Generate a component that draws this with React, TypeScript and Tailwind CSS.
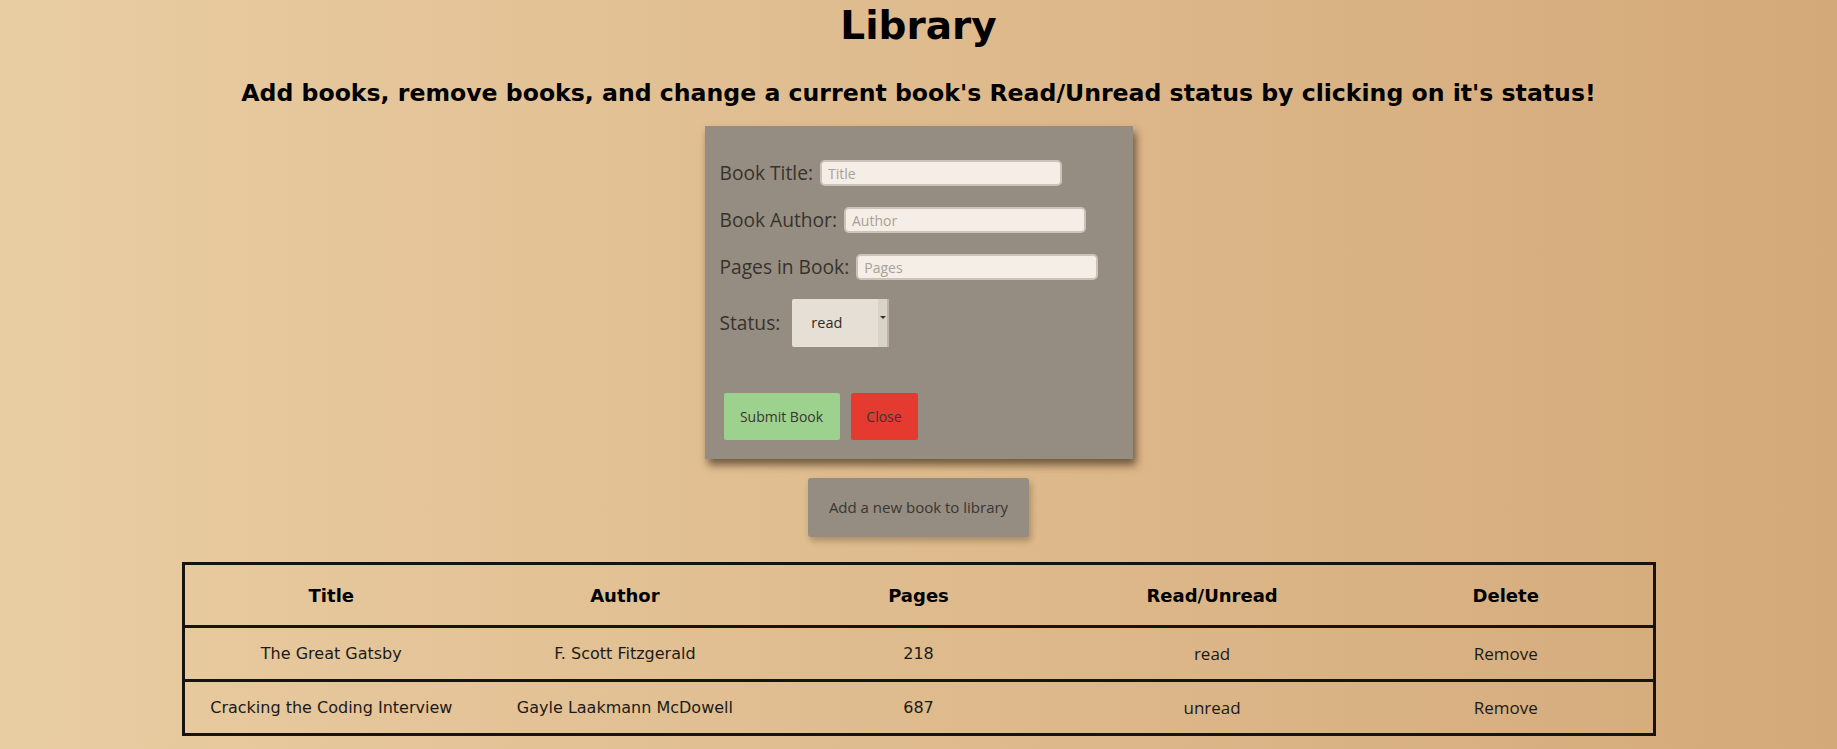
import React from "react";

const rows = [
  { title: "The Great Gatsby", author: "F. Scott Fitzgerald", pages: "218", status: "read" },
  { title: "Cracking the Coding Interview", author: "Gayle Laakmann McDowell", pages: "687", status: "unread" },
];

function Field({ label, placeholder }: { label: string; placeholder: string }) {
  return (
    <div className="flex items-center h-[26px] gap-[7px]">
      <span className="text-[19.2px] text-[#38322c] font-['Open_Sans',sans-serif] leading-none">{label}</span>
      <div className="w-[242px] h-[26px] rounded-[5px] border-2 border-[#cbc3ba] bg-[#f5eee6] flex items-center px-[6px]">
        <span className="text-[14px] text-[#a8a098] font-['Open_Sans',sans-serif]">{placeholder}</span>
      </div>
    </div>
  );
}

export default function App() {
  return (
    <div className="min-h-[749px] w-full bg-[linear-gradient(to_right,#e9cda2,#d4a979)] flex flex-col items-center font-['DejaVu_Sans',sans-serif]">
      <h1 className="mt-[3px] text-[39px] leading-[46px] font-bold text-black">Library</h1>
      <h2 className="mt-[30px] text-[23.6px] leading-[28px] font-bold text-black">
        Add books, remove books, and change a current book's Read/Unread status by clicking on it's status!
      </h2>

      <div className="mt-[19px] w-[428px] h-[333px] bg-[#958d82] shadow-[3px_6px_8px_rgba(40,25,10,0.6)] pt-[34px] pl-[15px] flex flex-col">
        <div className="flex flex-col gap-[21px]">
          <Field label="Book Title:" placeholder="Title" />
          <Field label="Book Author:" placeholder="Author" />
          <Field label="Pages in Book:" placeholder="Pages" />
        </div>
        <div className="mt-[19px] flex items-center gap-[12px] h-[48px]">
          <span className="text-[19.2px] text-[#38322c] font-['Open_Sans',sans-serif] leading-none">Status:</span>
          <div className="flex h-[48px] w-[97px] rounded-l-[2px] overflow-hidden">
            <div className="flex-1 bg-[#e6dfd6] flex items-center pl-[19px]">
              <span className="text-[14.5px] text-[#2e2a26] font-['Open_Sans',sans-serif]">read</span>
            </div>
            <div className="w-[11px] bg-[#d9d2c9] border-r-[2px] border-[#bdb5ab] flex justify-center pt-[17px]">
              <div className="w-0 h-0 border-l-[3px] border-r-[3px] border-t-[3px] border-l-transparent border-r-transparent border-t-[#333]" />
            </div>
          </div>
        </div>
        <div className="mt-[46px] ml-[4px] flex gap-[11px]">
          <div className="w-[116px] h-[47px] rounded-[2px] bg-[#9dd18e] flex items-center justify-center text-[14px] text-[#3a3530] font-['Open_Sans',sans-serif]">
            Submit Book
          </div>
          <div className="w-[67px] h-[47px] rounded-[2px] bg-[#e43a30] flex items-center justify-center text-[14px] text-[#3a3530] font-['Open_Sans',sans-serif]">
            Close
          </div>
        </div>
      </div>

      <div className="mt-[19px] w-[221px] h-[59px] rounded-[3px] bg-[#958d82] shadow-[2px_4px_6px_rgba(60,40,15,0.3)] flex items-center justify-center text-[15px] text-[#3a3530] font-['Open_Sans',sans-serif]">
        Add a new book to library
      </div>

      <div className="mt-[25px] w-[1474px] border-[3px] border-[#17130f] text-[#1c1a18]">
        <div className="grid grid-cols-5 h-[63px] border-b-[3px] border-[#17130f] items-center text-center text-[18px] font-bold text-black">
          <div>Title</div>
          <div>Author</div>
          <div>Pages</div>
          <div>Read/Unread</div>
          <div>Delete</div>
        </div>
        {rows.map((r, i) => (
          <div
            key={r.title}
            className={`grid grid-cols-5 items-center text-center text-[16px] ${i === 0 ? "h-[54px] border-b-[3px] border-[#17130f]" : "h-[51px]"}`}
          >
            <div>{r.title}</div>
            <div>{r.author}</div>
            <div>{r.pages}</div>
            <div className="font-['Open_Sans',sans-serif] text-[17px]">{r.status}</div>
            <div className="font-['Open_Sans',sans-serif] text-[17px]">Remove</div>
          </div>
        ))}
      </div>
    </div>
  );
}
